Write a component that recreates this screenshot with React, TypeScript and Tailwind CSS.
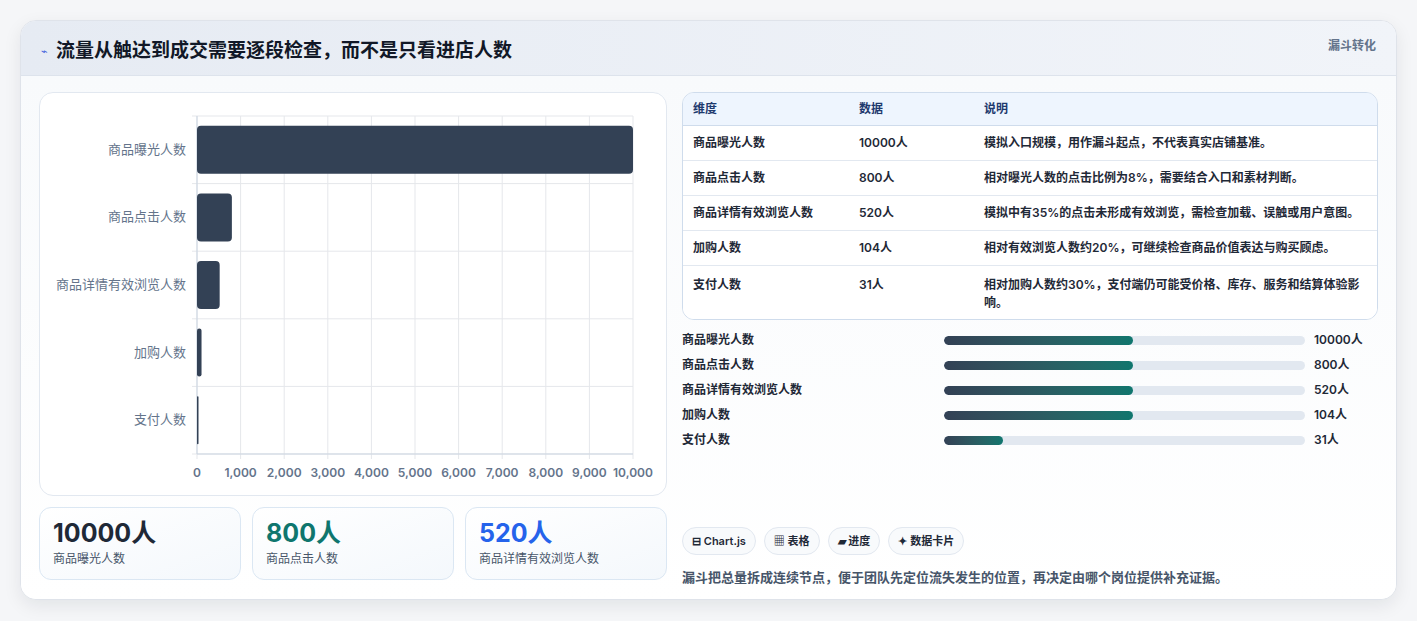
import React from "react";

const rows = [
  { n: "商品曝光人数", v: 10000, d: "模拟入口规模，用作漏斗起点，不代表真实店铺基准。" },
  { n: "商品点击人数", v: 800, d: "相对曝光人数的点击比例为8%，需要结合入口和素材判断。" },
  { n: "商品详情有效浏览人数", v: 520, d: "模拟中有35%的点击未形成有效浏览，需检查加载、误触或用户意图。" },
  { n: "加购人数", v: 104, d: "相对有效浏览人数约20%，可继续检查商品价值表达与购买顾虑。" },
  { n: "支付人数", v: 31, d: "相对加购人数约30%，支付端仍可能受价格、库存、服务和结算体验影响。" },
];
const fills = [189, 189, 189, 189, 59];

function Chart() {
  const L = 157, R = 593, T = 23, B = 361;
  const rh = (B - T) / 5;
  return (
    <svg width="626" height="402" className="block">
      {Array.from({ length: 11 }).map((_, i) => {
        const x = L + ((R - L) * i) / 10;
        return (
          <g key={i}>
            <line x1={x} y1={T} x2={x} y2={B + 5} stroke="#e5e7eb" />
            <text x={x} y={384} textAnchor="middle" fontSize="12" fontWeight="600" fill="#64748b">
              {(i * 1000).toLocaleString("en-US")}
            </text>
          </g>
        );
      })}
      {Array.from({ length: 6 }).map((_, i) => (
        <line key={i} x1={L - 5} y1={T + rh * i} x2={R} y2={T + rh * i} stroke="#e5e7eb" />
      ))}
      <line x1={L} y1={T} x2={L} y2={B} stroke="#cbd5e1" />
      <line x1={L} y1={B} x2={R} y2={B} stroke="#cbd5e1" />
      {rows.map((r, i) => {
        const cy = T + rh * i + rh / 2;
        const w = Math.max(((R - L) * r.v) / 10000, 1.5);
        return (
          <g key={i}>
            <text x={146} y={cy + 4} textAnchor="end" fontSize="13" fill="#64748b">{r.n}</text>
            <rect x={L} y={cy - 24} width={w} height={48} rx={Math.min(4, w / 2)} fill="#334155" />
          </g>
        );
      })}
    </svg>
  );
}

export default function App() {
  return (
    <div className="w-[1417px] h-[621px] bg-[#f5f6f8] pt-[20px] pl-[20px]" style={{ fontFamily: "Inter, 'Noto Sans CJK SC', sans-serif" }}>
      <div className="w-[1377px] h-[580px] bg-white rounded-[16px] border border-[#dfe3ea] shadow-[0_6px_18px_rgba(15,23,42,0.08)] overflow-hidden flex flex-col">
        <div className="h-[55px] bg-gradient-to-r from-[#e6ebf3] to-[#f1f4f9] border-b border-[#dde3ec] flex items-start justify-between px-[20px]">
          <div className="flex items-center gap-[8px] mt-[16px]">
            <span className="text-[#3b5bdb] text-[11px]">⌁</span>
            <span className="text-[19px] font-bold text-[#111827]">流量从触达到成交需要逐段检查，而不是只看进店人数</span>
          </div>
          <span className="text-[12px] font-semibold text-[#64748b] mt-[16px]">漏斗转化</span>
        </div>
        <div className="flex-1 bg-gradient-to-b from-[#f8fafc] to-white flex px-[18px] pt-[16px] gap-[15px]">
          <div className="w-[628px] flex flex-col gap-[11px]">
            <div className="h-[404px] bg-white rounded-[14px] border border-[#e2e8f0]"><Chart /></div>
            <div className="flex gap-[11px]">
              {[["10000人", "text-[#1f2937]"], ["800人", "text-[#0f766e]"], ["520人", "text-[#2563eb]"]].map(([v, c], i) => (
                <div key={i} className="w-[202px] h-[73px] rounded-[12px] border border-[#dbe7f3] bg-gradient-to-br from-white to-[#f4f8fc] px-[13px] pt-[10px]">
                  <div className={`text-[25px] font-bold leading-[30px] ${c}`}>{v}</div>
                  <div className="text-[12px] text-[#475569] mt-[2px]">{rows[i].n}</div>
                </div>
              ))}
            </div>
          </div>
          <div className="w-[696px] flex flex-col">
            <div className="rounded-[12px] border border-[#cfdcec] overflow-hidden text-[12px] text-[#1f2937] font-semibold">
              <div className="flex h-[33px] items-center bg-[#eef5fe] text-[#1e3a6e] border-b border-[#cfdcec]">
                <div className="w-[166px] pl-[10px]">维度</div>
                <div className="w-[125px] pl-[10px]">数据</div>
                <div className="flex-1 pl-[10px]">说明</div>
              </div>
              {rows.map((r, i) => (
                <div key={i} className={`flex ${i < 4 ? "h-[35px] items-center border-b border-[#e2e8f0]" : "h-[53px] pt-[10px]"} bg-white`}>
                  <div className="w-[166px] pl-[10px]">{r.n}</div>
                  <div className="w-[125px] pl-[10px]">{r.v}人</div>
                  <div className="flex-1 pl-[10px] pr-[12px] leading-[18px]">{r.d}</div>
                </div>
              ))}
            </div>
            <div className="mt-[11px] flex flex-col gap-[7px]">
              {rows.map((r, i) => (
                <div key={i} className="flex items-center h-[18px] text-[12px] font-semibold text-[#1f2937]">
                  <div className="w-[262px]">{r.n}</div>
                  <div className="w-[361px] h-[9px] rounded-full bg-[#e2e8f0] overflow-hidden">
                    <div className="h-full rounded-full bg-gradient-to-r from-[#334155] to-[#0f766e]" style={{ width: fills[i] }} />
                  </div>
                  <div className="ml-[9px]">{r.v}人</div>
                </div>
              ))}
            </div>
            <div className="flex gap-[8px] mt-[78px] text-[11px] font-semibold text-[#1f2937]">
              {["⊟ Chart.js", "▦ 表格", "▰ 进度", "✦ 数据卡片"].map((t) => (
                <div key={t} className="h-[28px] px-[9px] rounded-full border border-[#e2e8f0] bg-[#f8fafc] flex items-center">{t}</div>
              ))}
            </div>
            <div className="mt-[13px] text-[13px] text-[#475569] font-semibold">漏斗把总量拆成连续节点，便于团队先定位流失发生的位置，再决定由哪个岗位提供补充证据。</div>
          </div>
        </div>
      </div>
    </div>
  );
}
